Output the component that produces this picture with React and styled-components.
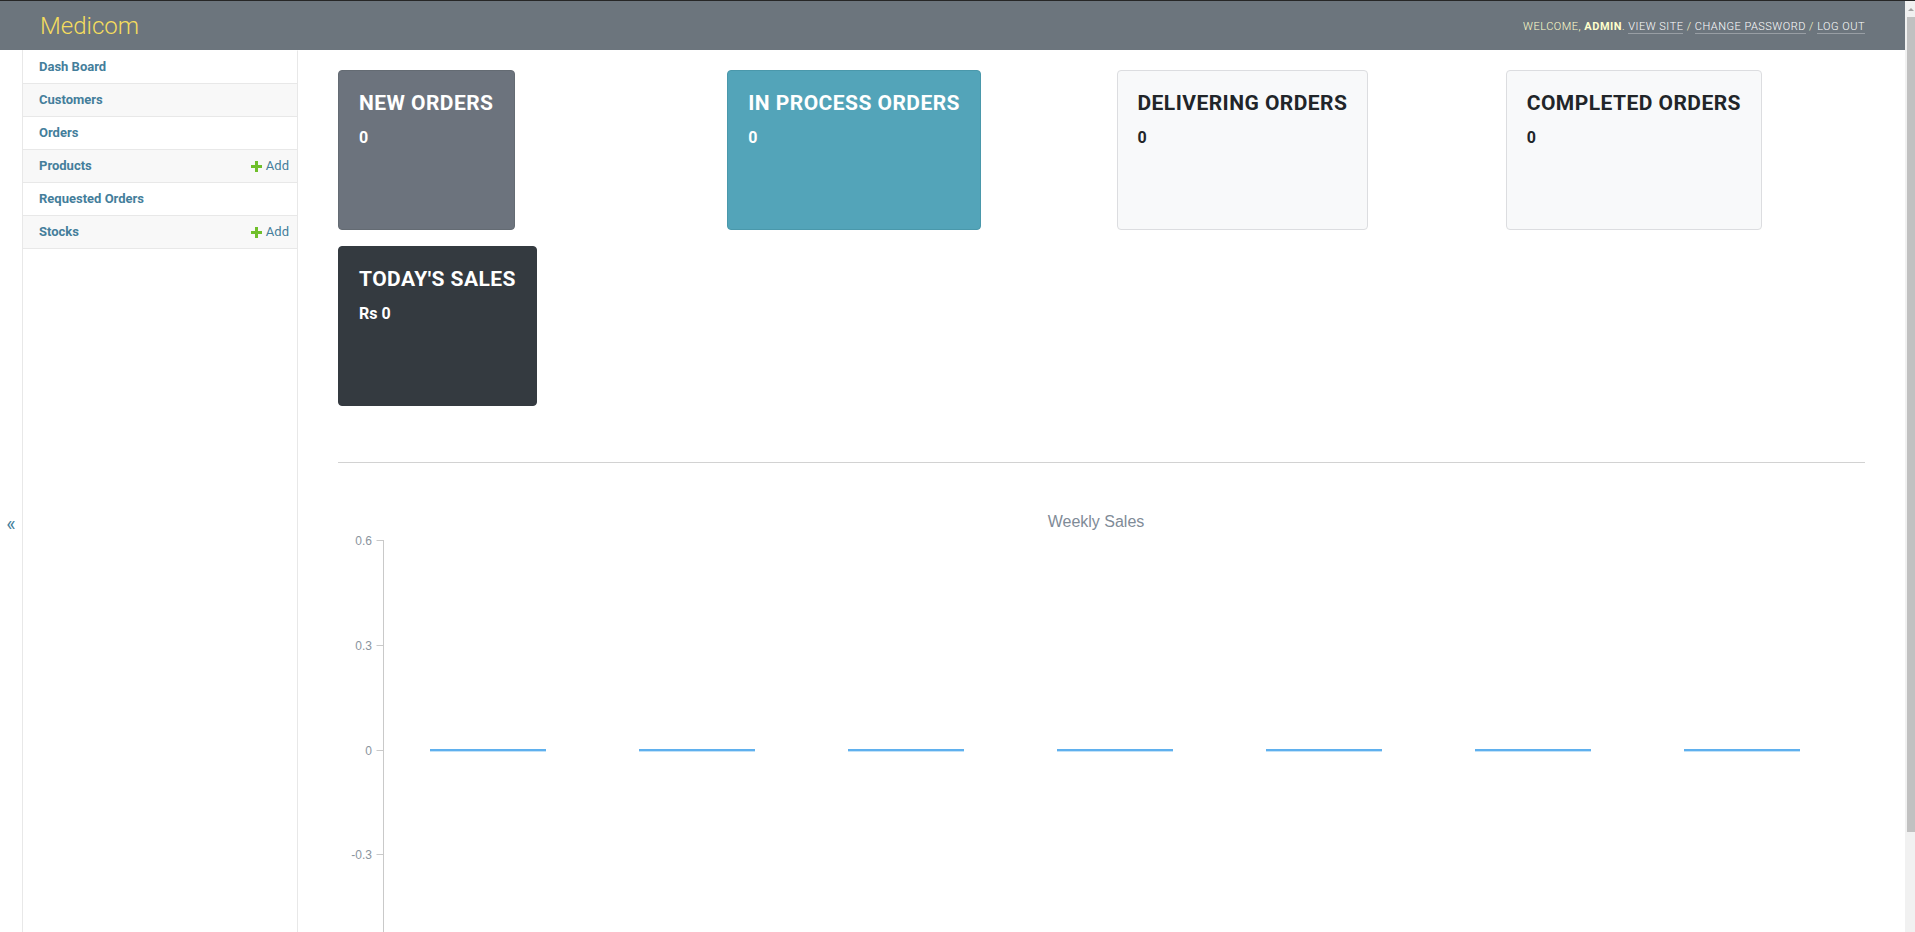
import React from 'react';
import styled, { createGlobalStyle, css } from 'styled-components';

const colors = {
  header: '#6c757d',
  brand: '#f5dd5d',
  link: '#447e9b',
  hairline: '#e8e8e8',
  rowAlt: '#f8f8f8',
  addGreen: '#70bf2b',
};

const GlobalStyle = createGlobalStyle`
  html, body {
    margin: 0;
    padding: 0;
    height: 100%;
    overflow: hidden;
    background: #fff;
  }
  body {
    font-family: Roboto, 'Liberation Sans', Arial, sans-serif;
    color: #333;
  }
`;

const Frame = styled.div`
  display: flex;
  box-sizing: border-box;
  height: 100vh;
  border-top: 1px solid #262626;
`;

const Viewport = styled.div`
  flex: 1;
  min-width: 0;
  overflow: hidden;
`;

const ScrollRail = styled.div`
  flex: 0 0 10px;
  display: flex;
  flex-direction: column;
  align-items: flex-end;
  background: #f1f1f1;
`;

const ScrollArrow = styled.div`
  height: 16px;
  width: 8px;
  display: flex;
  align-items: center;
  justify-content: center;

  &::before {
    content: '';
    border-left: 3px solid transparent;
    border-right: 3px solid transparent;
    border-bottom: 3px solid #a3a3a3;
  }
`;

const ScrollThumb = styled.div`
  width: 8px;
  height: 815px;
  background: #c1c1c1;
`;

const Header = styled.header`
  display: flex;
  align-items: center;
  justify-content: space-between;
  box-sizing: border-box;
  height: 49px;
  padding: 0 40px;
  background: ${colors.header};
  color: #ffc;
`;

const Branding = styled.h1`
  margin: 0;
  font-size: 24px;
  font-weight: 300;
  line-height: 28px;
  color: ${colors.brand};
`;

const UserTools = styled.div`
  font-size: 11px;
  font-weight: 300;
  letter-spacing: 0.5px;
  text-transform: uppercase;
  color: #ffc;
  padding-top: 1px;
`;

const UserName = styled.strong`
  font-weight: 700;
`;

const ToolLink = styled.a`
  color: #fff;
  text-decoration: none;
  border-bottom: 1px solid rgba(255, 255, 255, 0.3);
`;

const Main = styled.div`
  display: flex;
  align-items: stretch;
`;

const ToggleStrip = styled.div`
  flex: 0 0 22px;
  border-right: 1px solid ${colors.hairline};
  display: flex;
  justify-content: center;
  padding-top: 464px;
`;

const ToggleButton = styled.span`
  font-size: 20px;
  line-height: 20px;
  height: 20px;
  color: ${colors.link};
  cursor: pointer;
`;

const Sidebar = styled.nav`
  flex: 0 0 274px;
  border-top: 1px solid transparent;
  border-right: 1px solid ${colors.hairline};
`;

const NavRow = styled.div`
  display: flex;
  align-items: center;
  justify-content: space-between;
  padding: 8px 8px 8px 16px;
  line-height: 16px;
  font-size: 13px;
  border-bottom: 1px solid ${colors.hairline};
  background: ${(p) => (p.$alt ? colors.rowAlt : '#fff')};
`;

const NavLink = styled.a`
  color: ${colors.link};
  font-weight: 700;
  text-decoration: none;
`;

const AddLink = styled.a`
  display: flex;
  align-items: center;
  gap: 4px;
  color: ${colors.link};
  text-decoration: none;
  font-weight: 400;
`;

const Content = styled.main`
  flex: 1;
  min-width: 0;
  padding: 20px 40px 20px 40px;
`;

const CardGrid = styled.div`
  display: grid;
  grid-template-columns: repeat(4, 1fr);
  margin: 0 -15px;
`;

const CardCol = styled.div`
  padding: 0 15px;
`;

const variants = {
  secondary: css`
    background: #6c737d;
    border-color: #646b73;
    color: #fff;
  `,
  info: css`
    background: #53a4b9;
    border-color: #4a98ab;
    color: #fff;
  `,
  light: css`
    background: #f8f9fa;
    border-color: #dcdde0;
    color: #212529;
  `,
  dark: css`
    background: #343a40;
    border-color: #343a40;
    color: #fff;
  `,
};

const StatCard = styled.div`
  box-sizing: border-box;
  width: fit-content;
  height: 160px;
  margin-bottom: 16px;
  padding: 20px;
  border: 1px solid;
  border-radius: 4px;
  ${(p) => variants[p.$variant]}
`;

const CardTitle = styled.h5`
  margin: 0 0 11px;
  font-size: 21px;
  font-weight: 700;
  line-height: 24px;
  letter-spacing: 0.45px;
  text-transform: uppercase;
  white-space: nowrap;
`;

const CardValue = styled.p`
  margin: 0;
  font-size: 16px;
  font-weight: 700;
  line-height: 24px;
`;

const Divider = styled.hr`
  border: none;
  height: 1px;
  background: #d2d2d2;
  margin: 40px 0 17px;
`;

const ChartBox = styled.div`
  height: 531px;
`;

function PlusIcon() {
  return (
    <svg width="11" height="11" viewBox="0 0 11 11">
      <rect x="4" y="0" width="3" height="11" fill={colors.addGreen} />
      <rect x="0" y="4" width="11" height="3" fill={colors.addGreen} />
    </svg>
  );
}

const navItems = [
  { label: 'Dash Board' },
  { label: 'Customers' },
  { label: 'Orders' },
  { label: 'Products', add: true },
  { label: 'Requested Orders' },
  { label: 'Stocks', add: true },
];

const cards = [
  { title: 'New Orders', value: '0', variant: 'secondary' },
  { title: 'In Process Orders', value: '0', variant: 'info' },
  { title: 'Delivering Orders', value: '0', variant: 'light' },
  { title: 'Completed Orders', value: '0', variant: 'light' },
  { title: "Today's Sales", value: 'Rs 0', variant: 'dark' },
];

const weekly = [0, 0, 0, 0, 0, 0, 0];

function WeeklyChart({ data }) {
  const axisX = 45.5;
  const top = 60;
  const step = 104.75;
  const ticks = [0.6, 0.3, 0, -0.3];
  const zeroY = top + step * 2;
  const catW = 209;
  const barW = 116;
  return (
    <svg width="100%" height="531">
      <text
        x="758"
        y="47"
        textAnchor="middle"
        fontFamily="'Liberation Sans', Arial, sans-serif"
        fontSize="16"
        fill="#7f8b97"
      >
        Weekly Sales
      </text>
      <line x1={axisX} y1={top} x2={axisX} y2={top + step * 4} stroke="#c9c9c9" strokeWidth="1" />
      {ticks.map((t, i) => {
        const y = Math.round(top + step * i) + 0.5;
        return (
          <g key={t}>
            <line x1={axisX - 7} y1={y} x2={axisX} y2={y} stroke="#c9c9c9" strokeWidth="1" />
            <text
              x="34"
              y={y + 4}
              textAnchor="end"
              fontFamily="'Liberation Sans', Arial, sans-serif"
              fontSize="12"
              fill="#8a949e"
            >
              {t}
            </text>
          </g>
        );
      })}
      {data.map((v, i) => {
        const x = axisX + i * catW + (catW - barW) / 2;
        const y = Math.round(zeroY - v * (step / 0.3)) - 1;
        return (
          <g key={i}>
            <rect x={x} y={y} width={barW} height="2" fill="#5fb0ee" />
            <rect x={x} y={y + 2} width={barW} height="1" fill="#c3e2f8" />
          </g>
        );
      })}
    </svg>
  );
}

export default function App() {
  return (
    <>
      <GlobalStyle />
      <Frame>
        <Viewport>
          <Header>
            <Branding>Medicom</Branding>
            <UserTools>
              Welcome, <UserName>admin</UserName>.{' '}
              <ToolLink href="#">View site</ToolLink> /{' '}
              <ToolLink href="#">Change password</ToolLink> /{' '}
              <ToolLink href="#">Log out</ToolLink>
            </UserTools>
          </Header>
          <Main>
            <ToggleStrip>
              <ToggleButton>«</ToggleButton>
            </ToggleStrip>
            <Sidebar>
              {navItems.map((item, i) => (
                <NavRow key={item.label} $alt={i % 2 === 1}>
                  <NavLink href="#">{item.label}</NavLink>
                  {item.add && (
                    <AddLink href="#">
                      <PlusIcon />
                      Add
                    </AddLink>
                  )}
                </NavRow>
              ))}
            </Sidebar>
            <Content>
              <CardGrid>
                {cards.map((c) => (
                  <CardCol key={c.title}>
                    <StatCard $variant={c.variant}>
                      <CardTitle>{c.title}</CardTitle>
                      <CardValue>{c.value}</CardValue>
                    </StatCard>
                  </CardCol>
                ))}
              </CardGrid>
              <Divider />
              <ChartBox>
                <WeeklyChart data={weekly} />
              </ChartBox>
            </Content>
          </Main>
        </Viewport>
        <ScrollRail>
          <ScrollArrow />
          <ScrollThumb />
        </ScrollRail>
      </Frame>
    </>
  );
}
